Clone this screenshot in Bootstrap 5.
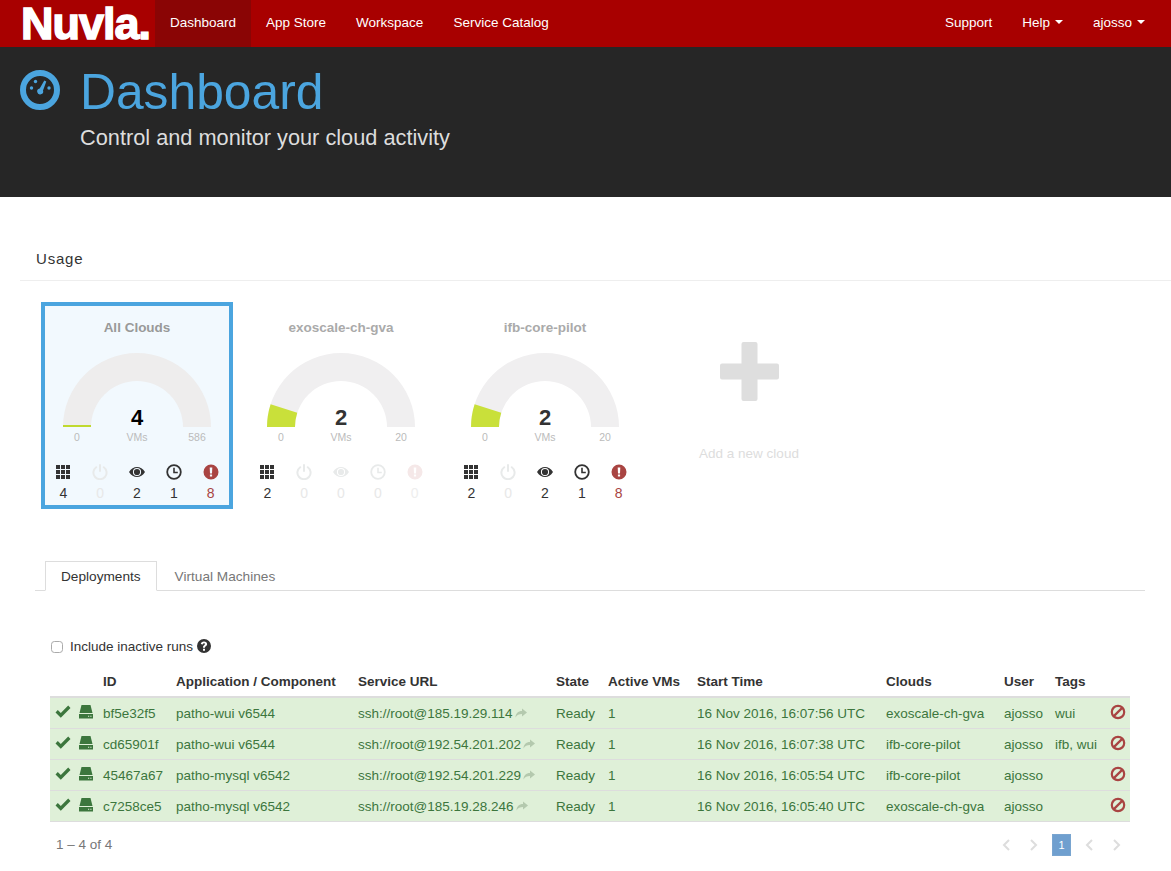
<!DOCTYPE html>
<html lang="en">
<head>
  <meta charset="UTF-8" />
  <title>Dashboard</title>
  <link href="https://cdn.jsdelivr.net/npm/bootstrap@5.3.3/dist/css/bootstrap.min.css" rel="stylesheet" />
  <style>
    body { font-family: "Liberation Sans", Arial, sans-serif; font-size: 13.5px; color: #333; background: #fff; }

    /* navbar */
    .top-nav { background: #a80000; height: 47px; padding: 0 11px 0 0; }
    .top-nav .navbar-brand { width: 155px; height: 47px; margin: 0; padding: 0 0 0 21px; color: #fff; font-size: 45px; line-height: 47px; font-weight: 700; letter-spacing: -1px; -webkit-text-stroke: 1.5px #fff; }
    .top-nav .navbar-nav .nav-link { color: #fff; font-size: 13.5px; line-height: 45px; padding: 0 15px; height: 47px; }
    .top-nav .navbar-nav .nav-link.active { background: #8a0505; color: #fff; }
    .top-nav .dropdown-toggle::after { border-top-width: 4px; border-left-width: 4px; border-right-width: 4px; margin-left: 5px; }

    /* page header */
    .page-head { background: #262626; height: 150px; padding: 17px 0 0 20px; }
    .head-icon { width: 40px; height: 40px; margin-top: 6px; margin-right: 20px; }
    .page-head h1 { color: #4ba5df; font-size: 49.75px; line-height: 57px; font-weight: 400; margin: 0; }
    .page-head p { color: #ddd; font-size: 21.75px; line-height: 30px; margin: 2px 0 0; }

    /* usage */
    .usage-title { font-size: 15px; letter-spacing: .8px; line-height: 20px; margin: 52px 0 0 20px; padding: 0 0 11px 16px; border-bottom: 1px solid #eee; }
    .cloud-row { margin: 21px 0 0 41px; gap: 12px; }
    .cloud-tile { width: 192px; height: 207px; border: 4px solid transparent; padding-top: 12px; text-align: center; }
    .cloud-tile.selected { border-color: #4ba5df; background: #f2f9fe; }
    .tile-name { font-size: 13.5px; font-weight: 700; line-height: 20px; color: #aaa; }
    .selected .tile-name { color: #999; }
    .gauge-box { position: relative; width: 148px; height: 74px; margin: 15px auto 0; }
    .gauge-box svg { display: block; }
    .gauge-num { position: absolute; left: 0; right: 0; top: 53px; font-size: 22px; line-height: 24px; font-weight: 700; color: #333; }
    .selected .gauge-num { color: #000; }
    .gauge-scale { width: 148px; margin: 3px auto 0; font-size: 10.5px; line-height: 14px; color: #bbb; }
    .scale-end { width: 28px; }
    .stat-row { margin-top: 20px; }
    .stat-cell { flex: 1 1 0; font-size: 14px; line-height: 20px; color: #333; }
    .stat-cell svg { display: block; margin: 0 auto 3px; width: 16px; height: 16px; }
    .stat-cell.idle { color: #e8e8e8; }
    .stat-cell.idle svg { color: #e8eaea; }
    .stat-cell.err { color: #a94442; }
    .faded .stat-cell.err.idle { color: #eee; }
    .faded .stat-cell.err.idle svg { color: #f5e8e8; }
    .plus-tile { width: 192px; height: 207px; padding-top: 40px; text-align: center; color: #ddd; }
    .plus-tile svg { display: block; margin: 0 auto; }
    .plus-tile div { margin-top: 44px; font-size: 13.5px; line-height: 18px; }

    /* tabs */
    .run-tabs { margin: 52px 26px 0 35px; padding-left: 10px; border-color: #ddd; }
    .run-tabs .nav-link { font-size: 13.65px; line-height: 18px; padding: 6px 15px 4px; margin-right: 2px; color: #777; border-radius: 0; }
    .run-tabs .nav-link.active { color: #333; border-color: #ddd #ddd #fff; }

    /* runs table */
    .inactive-row { margin: 46px 0 0 50px; line-height: 20px; }
    .inactive-row .form-check-input { width: 12px; height: 12px; margin: 0 7px 0 1px; float: none; border-color: #aaa; }
    .inactive-row svg { margin: -2px 0 0 3px; }
    .runs-wrap { margin: 15px 41px 0 50px; }
    .runs-table { table-layout: fixed; width: 1080px; margin: 0; font-size: 13.5px; }
    .runs-table th { font-weight: 700; color: #333; padding: 0 5px 5px; height: 25px; line-height: 18px; border-bottom: 2px solid #ddd; vertical-align: bottom; }
    .runs-table td { background: #dff0d8; --bs-table-bg: #dff0d8; color: #3c763d; padding: 2px 5px 0; height: 31px; line-height: 18px; border-bottom: 1px solid #ddd; vertical-align: middle; white-space: nowrap; overflow: visible; }
    .runs-table td svg.row-icon { display: block; margin-top: -3px; }
    .runs-table td svg.go-arrow { display: inline-block; margin-left: 2px; color: #b4c9ae; vertical-align: -1px; }
    .runs-table td svg.stop-icon { color: #a94442; }
    .runs-table .c-state { width: 23px; }
    .runs-table .c-kind { width: 25px; }
    .runs-table .c-id { width: 73px; }
    .runs-table .c-app { width: 182px; }
    .runs-table .c-url { width: 198px; }
    .runs-table .c-st { width: 52px; }
    .runs-table .c-vms { width: 89px; }
    .runs-table .c-time { width: 189px; }
    .runs-table .c-cloud { width: 118px; }
    .runs-table .c-user { width: 51px; }
    .runs-table .c-tags { width: 55px; }
    .runs-table .c-stop { width: 25px; }
    .pager-row { margin: 12px 49px 0 56px; height: 22px; color: #777; line-height: 22px; }
    .pager-row svg { display: block; color: #ddd; }
    .pager-gap { gap: 13px; }
    .pager-pair { gap: 18px; }
    .pager-on { width: 19px; height: 22px; background: #6f9fcf; border: 1px solid #79a5d0; color: #fff; text-align: center; font-size: 11px; line-height: 20px; }
  </style>
</head>
<body>

  <svg width="0" height="0" class="d-block position-absolute">
    <defs>
      <symbol id="i-grid" viewBox="0 0 16 16"><path fill="currentColor" d="M1 1h4v4H1zM6 1h4v4H6zM11 1h4v4h-4zM1 6h4v4H1zM6 6h4v4H6zM11 6h4v4h-4zM1 11h4v4H1zM6 11h4v4H6zM11 11h4v4h-4z"/></symbol>
      <symbol id="i-power" viewBox="0 0 16 16"><path fill="none" stroke="currentColor" stroke-width="2" stroke-linecap="round" d="M4.200 3.200a6.600 6.600 0 1 0 7.600 0M8 1v6"/></symbol>
      <symbol id="i-eye" viewBox="0 0 16 16"><path fill="currentColor" fill-rule="evenodd" d="M0 8C2 4.500 5 3 8 3s6 1.500 8 5c-2 3.500-5 5-8 5S2 11.500 0 8zM8 3.900a4.100 4.100 0 1 0 0 8.200 4.100 4.100 0 0 0 0-8.200zM8 4.900a3.100 3.100 0 1 1 0 6.200 3.100 3.100 0 0 1 0-6.200z"/></symbol>
      <symbol id="i-clock" viewBox="0 0 16 16"><circle cx="8" cy="8" r="6.800" fill="none" stroke="currentColor" stroke-width="1.800"/><path fill="none" stroke="currentColor" stroke-width="1.600" d="M8 3.800V8.500H11.800"/></symbol>
      <symbol id="i-alert" viewBox="0 0 16 16"><path fill="currentColor" fill-rule="evenodd" d="M8 .5a7.500 7.500 0 1 1 0 15 7.500 7.500 0 0 1 0-15zM6.700 3.500l.3 6h2l.3-6zM6.900 10.500v2h2.200v-2z"/></symbol>
      <symbol id="i-ok" viewBox="0 0 16 16"><path fill="currentColor" d="M.5 8.500 2.800 6.100l3 3 7.400-7.500 2.300 2.400L5.800 13.800z"/></symbol>
      <symbol id="i-hdd" viewBox="0 0 16 16"><path fill="currentColor" fill-rule="evenodd" d="M3.500 1h9L14.500 9h-13zM1 10h14v4.500H1zM10 11.700v1h1.200v-1zM12.300 11.700v1h1.200v-1z"/></symbol>
      <symbol id="i-ban" viewBox="0 0 16 16"><circle cx="8" cy="8" r="6.200" fill="none" stroke="currentColor" stroke-width="2.200"/><path stroke="currentColor" stroke-width="2.200" d="M3.600 12.400 12.400 3.600"/></symbol>
      <symbol id="i-share" viewBox="0 0 12 12"><path fill="currentColor" d="M7 1.500 12 5.500 7 9.500V7C4 7 2 7.800 .5 10.500 .7 6.500 3 4 7 4z"/></symbol>
      <symbol id="i-help" viewBox="0 0 16 16"><path fill="currentColor" fill-rule="evenodd" d="M8 1a7 7 0 1 1 0 14A7 7 0 0 1 8 1zM8 3.500c-1.800 0-3 .9-3.200 2.600l2 .3c.1-.8.500-1.200 1.200-1.200s1 .3 1 .8c0 .4-.3.700-.9 1.200-.8.600-1.100 1.200-1.100 2.100v.4h2v-.3c0-.5.200-.8.800-1.200.9-.7 1.300-1.300 1.300-2.300 0-1.500-1.300-2.400-3.100-2.400zM7 10.800v1.900h2v-1.900z"/></symbol>
      <symbol id="i-prev" viewBox="0 0 10 14"><path fill="none" stroke="currentColor" stroke-width="2" d="M8 2 3 7l5 5"/></symbol>
      <symbol id="i-next" viewBox="0 0 10 14"><path fill="none" stroke="currentColor" stroke-width="2" d="M2 2l5 5-5 5"/></symbol>
    </defs>
  </svg>

  <!-- NAVBAR -->
  <nav class="navbar navbar-expand top-nav">
    <a class="navbar-brand" href="#">Nuvla.</a>
    <ul class="navbar-nav">
      <li class="nav-item"><a class="nav-link active" href="#">Dashboard</a></li>
      <li class="nav-item"><a class="nav-link" href="#">App Store</a></li>
      <li class="nav-item"><a class="nav-link" href="#">Workspace</a></li>
      <li class="nav-item"><a class="nav-link" href="#">Service Catalog</a></li>
    </ul>
    <ul class="navbar-nav ms-auto">
      <li class="nav-item"><a class="nav-link" href="#">Support</a></li>
      <li class="nav-item"><a class="nav-link dropdown-toggle" href="#">Help</a></li>
      <li class="nav-item"><a class="nav-link dropdown-toggle" href="#">ajosso</a></li>
    </ul>
  </nav>

  <!-- HEADER -->
  <div class="page-head d-flex align-items-start">
    <svg class="head-icon" viewBox="0 0 40 40">
      <circle cx="20" cy="20" r="17" fill="none" stroke="#4ba5df" stroke-width="6"/>
      <path fill="#4ba5df" d="M24.300 10.500 26.300 11.500 23 20.500a3 3 0 1 1-3.300-2z"/>
      <circle cx="11.500" cy="18" r="1.700" fill="#4ba5df"/>
      <circle cx="15.500" cy="11.500" r="1.700" fill="#4ba5df"/>
      <circle cx="29" cy="18" r="1.700" fill="#4ba5df"/>
    </svg>
    <div>
      <h1>Dashboard</h1>
      <p>Control and monitor your cloud activity</p>
    </div>
  </div>

  <!-- USAGE -->
  <div class="usage-title">Usage</div>
  <div class="d-flex cloud-row">
    <div class="cloud-tile selected">
      <div class="tile-name">All Clouds</div>
      <div class="gauge-box">
        <svg width="148" height="74" viewBox="0 0 148 74">
          <path fill="#eeeded" d="M0 74a74 74 0 0 1 148 0h-28a46 46 0 0 0-92 0z"/>
          <path fill="#c0d92e" d="M0 74 .02 72h28l0 2z"/>
        </svg>
        <div class="gauge-num">4</div>
      </div>
      <div class="d-flex justify-content-between gauge-scale"><span class="scale-end">0</span><span>VMs</span><span class="scale-end">586</span></div>
      <div class="d-flex stat-row">
        <div class="stat-cell"><svg><use href="#i-grid"/></svg>4</div>
        <div class="stat-cell idle"><svg><use href="#i-power"/></svg>0</div>
        <div class="stat-cell"><svg><use href="#i-eye"/></svg>2</div>
        <div class="stat-cell"><svg><use href="#i-clock"/></svg>1</div>
        <div class="stat-cell err"><svg><use href="#i-alert"/></svg>8</div>
      </div>
    </div>

    <div class="cloud-tile faded">
      <div class="tile-name">exoscale-ch-gva</div>
      <div class="gauge-box">
        <svg width="148" height="74" viewBox="0 0 148 74">
          <path fill="#f0eff0" d="M0 74a74 74 0 0 1 148 0h-28a46 46 0 0 0-92 0z"/>
          <path fill="#c9e03a" d="M0 74A74 74 0 0 1 3.620 51.130L30.250 59.790A46 46 0 0 0 28 74z"/>
        </svg>
        <div class="gauge-num">2</div>
      </div>
      <div class="d-flex justify-content-between gauge-scale"><span class="scale-end">0</span><span>VMs</span><span class="scale-end">20</span></div>
      <div class="d-flex stat-row">
        <div class="stat-cell"><svg><use href="#i-grid"/></svg>2</div>
        <div class="stat-cell idle"><svg><use href="#i-power"/></svg>0</div>
        <div class="stat-cell idle"><svg><use href="#i-eye"/></svg>0</div>
        <div class="stat-cell idle"><svg><use href="#i-clock"/></svg>0</div>
        <div class="stat-cell err idle"><svg><use href="#i-alert"/></svg>0</div>
      </div>
    </div>

    <div class="cloud-tile">
      <div class="tile-name">ifb-core-pilot</div>
      <div class="gauge-box">
        <svg width="148" height="74" viewBox="0 0 148 74">
          <path fill="#f0eff0" d="M0 74a74 74 0 0 1 148 0h-28a46 46 0 0 0-92 0z"/>
          <path fill="#c9e03a" d="M0 74A74 74 0 0 1 3.620 51.130L30.250 59.790A46 46 0 0 0 28 74z"/>
        </svg>
        <div class="gauge-num">2</div>
      </div>
      <div class="d-flex justify-content-between gauge-scale"><span class="scale-end">0</span><span>VMs</span><span class="scale-end">20</span></div>
      <div class="d-flex stat-row">
        <div class="stat-cell"><svg><use href="#i-grid"/></svg>2</div>
        <div class="stat-cell idle"><svg><use href="#i-power"/></svg>0</div>
        <div class="stat-cell"><svg><use href="#i-eye"/></svg>2</div>
        <div class="stat-cell"><svg><use href="#i-clock"/></svg>1</div>
        <div class="stat-cell err"><svg><use href="#i-alert"/></svg>8</div>
      </div>
    </div>

    <div class="plus-tile">
      <svg width="59" height="59" viewBox="0 0 59 59"><path fill="#dedede" d="M23.500 0h12a2 2 0 0 1 2 2v19.500H57a2 2 0 0 1 2 2v12a2 2 0 0 1-2 2H37.500V57a2 2 0 0 1-2 2h-12a2 2 0 0 1-2-2V37.500H2a2 2 0 0 1-2-2v-12a2 2 0 0 1 2-2h19.500V2a2 2 0 0 1 2-2z"/></svg>
      <div>Add a new cloud</div>
    </div>
  </div>

  <!-- TABS -->
  <ul class="nav nav-tabs run-tabs">
    <li class="nav-item"><a class="nav-link active" href="#">Deployments</a></li>
    <li class="nav-item"><a class="nav-link" href="#">Virtual Machines</a></li>
  </ul>

  <div class="d-flex align-items-center inactive-row">
    <input class="form-check-input" type="checkbox" id="inactiveRuns" />
    <label for="inactiveRuns">Include inactive runs</label>
    <svg width="16" height="16"><use href="#i-help"/></svg>
  </div>

  <div class="runs-wrap">
    <table class="table runs-table">
      <colgroup>
        <col class="c-state" /><col class="c-kind" /><col class="c-id" /><col class="c-app" /><col class="c-url" /><col class="c-st" />
        <col class="c-vms" /><col class="c-time" /><col class="c-cloud" /><col class="c-user" /><col class="c-tags" /><col class="c-stop" />
      </colgroup>
      <thead>
        <tr><th></th><th></th><th>ID</th><th>Application / Component</th><th>Service URL</th><th>State</th><th>Active VMs</th><th>Start Time</th><th>Clouds</th><th>User</th><th>Tags</th><th></th></tr>
      </thead>
      <tbody></tbody>
    </table>
  </div>

  <div class="d-flex justify-content-between align-items-center pager-row">
    <div>1 – 4 of 4</div>
    <div class="d-flex align-items-center pager-gap">
      <div class="d-flex pager-pair">
        <svg width="10" height="14"><use href="#i-prev"/></svg>
        <svg width="10" height="14"><use href="#i-next"/></svg>
      </div>
      <div class="pager-on">1</div>
      <div class="d-flex pager-pair">
        <svg width="10" height="14"><use href="#i-prev"/></svg>
        <svg width="10" height="14"><use href="#i-next"/></svg>
      </div>
    </div>
  </div>

  <script>
    const runs = [
      { id: "bf5e32f5", app: "patho-wui v6544", url: "ssh://root@185.19.29.114", time: "16 Nov 2016, 16:07:56 UTC", cloud: "exoscale-ch-gva", tags: "wui" },
      { id: "cd65901f", app: "patho-wui v6544", url: "ssh://root@192.54.201.202", time: "16 Nov 2016, 16:07:38 UTC", cloud: "ifb-core-pilot", tags: "ifb, wui" },
      { id: "45467a67", app: "patho-mysql v6542", url: "ssh://root@192.54.201.229", time: "16 Nov 2016, 16:05:54 UTC", cloud: "ifb-core-pilot", tags: "" },
      { id: "c7258ce5", app: "patho-mysql v6542", url: "ssh://root@185.19.28.246", time: "16 Nov 2016, 16:05:40 UTC", cloud: "exoscale-ch-gva", tags: "" },
    ];
    const tbody = document.querySelector(".runs-table tbody");
    runs.forEach((run) => {
      tbody.insertAdjacentHTML("beforeend", `
        <tr>
          <td><svg class="row-icon" width="16" height="16"><use href="#i-ok"/></svg></td>
          <td><svg class="row-icon" width="16" height="16"><use href="#i-hdd"/></svg></td>
          <td>${run.id}</td>
          <td>${run.app}</td>
          <td>${run.url}<svg class="go-arrow" width="12" height="12"><use href="#i-share"/></svg></td>
          <td>Ready</td>
          <td>1</td>
          <td>${run.time}</td>
          <td>${run.cloud}</td>
          <td>ajosso</td>
          <td>${run.tags}</td>
          <td><svg class="row-icon stop-icon" width="16" height="16"><use href="#i-ban"/></svg></td>
        </tr>
      `);
    });
  </script>

  <script src="https://cdn.jsdelivr.net/npm/bootstrap@5.3.3/dist/js/bootstrap.bundle.min.js"></script>
</body>
</html>
